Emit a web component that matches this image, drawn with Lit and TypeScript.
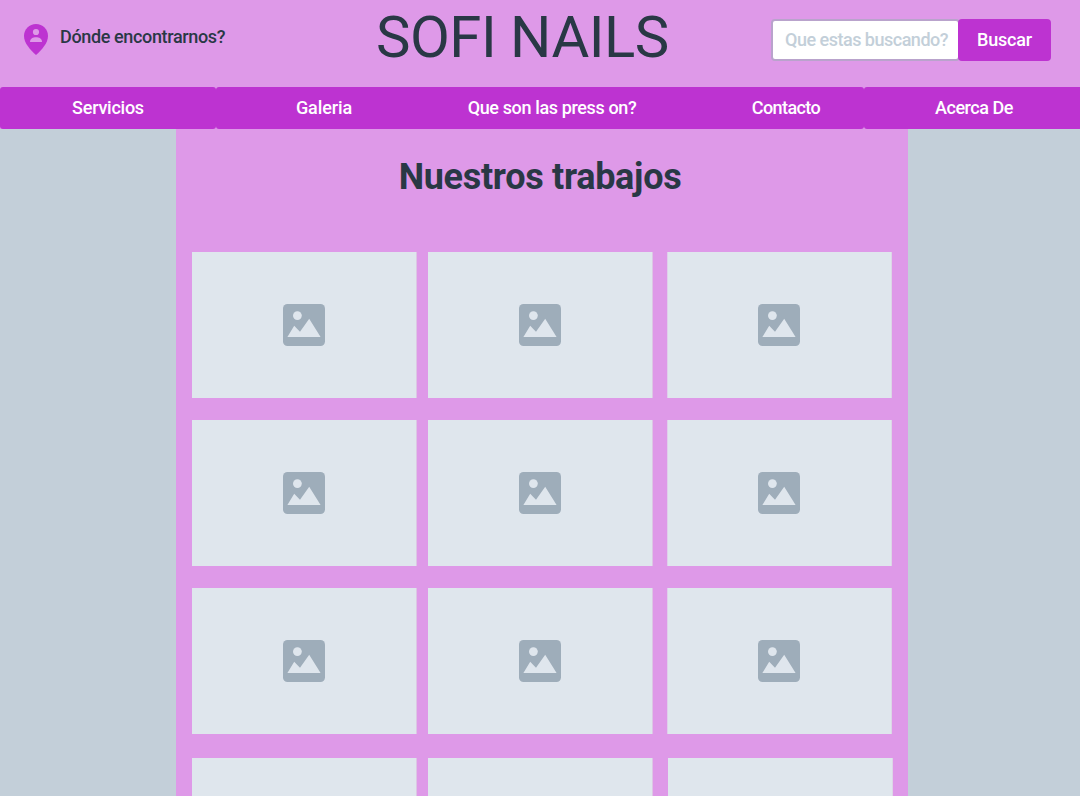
import { LitElement, html, css } from "lit";
import { customElement } from "lit/decorators.js";

@customElement("photo-card")
class PhotoCard extends LitElement {
  static styles = css`
    :host { display: flex; align-items: center; justify-content: center; background: #dfe6ed; }
    svg { display: block; width: 42px; height: 42px; }
  `;
  render() {
    return html`<svg viewBox="0 0 42 42">
      <rect width="42" height="42" rx="4.5" fill="#9eadba"></rect>
      <circle cx="14.4" cy="11.6" r="4.4" fill="#dfe6ed"></circle>
      <path d="M4.4 33 L11.2 21.8 L17 27.8 L26.2 14.8 L37.6 33 Z" fill="#dfe6ed"></path>
    </svg>`;
  }
}

@customElement("app-root")
class AppRoot extends LitElement {
  static styles = css`
    :host {
      display: flex; flex-direction: column; width: 1080px; height: 796px; overflow: hidden;
      background: #c3cfd9; color: #293845; font: 500 18px/22px Roboto, sans-serif;
    }
    * { box-sizing: border-box; }
    header { display: flex; height: 87px; flex: none; background: #de99e8; }
    .place { display: flex; width: 376px; padding: 24px 0 0 24px; }
    .pin { width: 24px; height: 31px; margin-right: 12px; flex: none; }
    .label { margin-top: 2px; font-size: 18px; letter-spacing: -0.36px; white-space: nowrap; }
    h1 { margin: 0; width: 396px; font-weight: 400; font-size: 58px; line-height: 74px; white-space: nowrap; letter-spacing: -0.5px; }
    .search { display: flex; padding-top: 19px; height: 61px; }
    .input {
      width: 189px; height: 42px; margin: 0 -2px 0 -1px; background: #fff; border: 2px solid #b9a3cc;
      border-radius: 4px; color: #c3cfd9; padding: 8px 0 0 12px; white-space: nowrap;
      letter-spacing: -0.5px;
    }
    .go {
      position: relative; width: 93px; height: 42px; border-radius: 4px; background: #bd33d1; color: #fff;
      text-align: center; line-height: 42px; letter-spacing: -0.2px;
    }
    nav {
      display: grid; grid-template-columns: 216px 216px 240px 192px 220px; height: 42px; flex: none;
      color: #fff; background: #de99e8; line-height: 42px; text-align: center; white-space: nowrap;
    }
    nav div { background: #bd33d1; }
    .n0 { border-radius: 3px; letter-spacing: -0.25px; }
    .n1 { border-radius: 3px 0 0 3px; letter-spacing: -0.1px; }
    .n2 { letter-spacing: -0.37px; }
    .n3 { border-radius: 0 3px 3px 0; padding-left: 36px; letter-spacing: -0.6px; }
    .n4 { border-radius: 3px; letter-spacing: -0.45px; }
    main { width: 732px; margin-left: 176px; flex: 1; min-height: 0; background: #de99e8; padding: 24px 16px 0; }
    h2 { margin: 0 0 51px -4px; font-size: 36px; line-height: 48px; font-weight: 700; text-align: center; white-space: nowrap; letter-spacing: -0.3px; }
    .grid { display: grid; grid-template-columns: 225px 225px 225px; column-gap: 11px; grid-template-rows: repeat(4, 146px); row-gap: 22px; }
    photo-card { border-right: 1px solid #dcc6e4; }
    .c2 { box-sizing: border-box; padding-right: 1px; margin-left: 3px; margin-right: -3px; border-left: 1px solid #dfcfeb; border-right-color: #dcd6e6; }
    .last { margin-top: 2px; margin-bottom: -2px; }
    .c2.last { margin-left: 4px; margin-right: -4px; border-left: 0; }
  `;
  render() {
    const nav = ["Servicios", "Galeria", "Que son las press on?", "Contacto", "Acerca De"];
    return html`
      <header>
        <div class="place">
          <svg class="pin" viewBox="0 0 24 31">
            <path d="M12 0C5.3 0 0 5.2 0 11.9C0 19 6 25.200 12 31C18 25.200 24 19 24 11.900C24 5.200 18.700 0 12 0Z" fill="#bd33d1"></path>
            <circle cx="12" cy="8" r="3.1" fill="#de99e8"></circle>
            <path d="M6 18C6 14.600 9 13.200 12 13.200S18 14.600 18 18Z" fill="#de99e8"></path>
          </svg>
          <span class="label">Dónde encontrarnos?</span>
        </div>
        <h1>SOFI NAILS</h1>
        <div class="search"><div class="input">Que estas buscando?</div><div class="go">Buscar</div></div>
      </header>
      <nav>${nav.map((n, i) => html`<div class="n${i}">${n}</div>`)}</nav>
      <main>
        <h2>Nuestros trabajos</h2>
        <div class="grid">
          ${Array.from({ length: 12 }, (_, i) => html`<photo-card class="c${i % 3} ${i > 8 ? "last" : ""}"></photo-card>`)}
        </div>
      </main>`;
  }
}
